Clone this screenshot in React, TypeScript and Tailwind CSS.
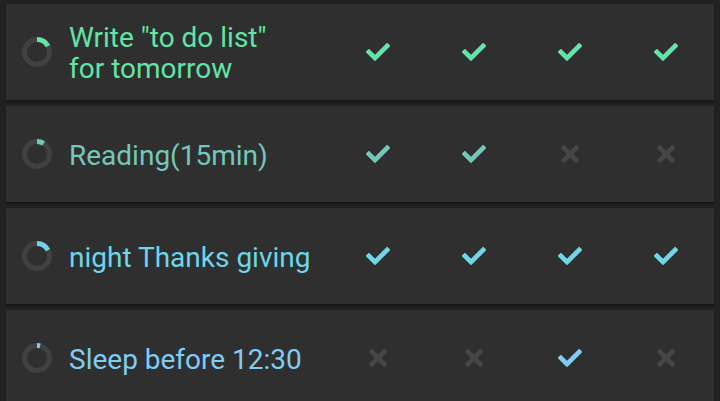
import React from "react";
import { FaCheck, FaTimes } from "react-icons/fa";

type Row = { text: string[]; color: string; pct: number; marks: boolean[] };

const rows: Row[] = [
  { text: ['Write "to do list"', "for tomorrow"], color: "#5fe6a6", pct: 0.17, marks: [true, true, true, true] },
  { text: ["Reading(15min)"], color: "#72c8bb", pct: 0.09, marks: [true, true, false, false] },
  { text: ["night Thanks giving"], color: "#6dd6e8", pct: 0.17, marks: [true, true, true, true] },
  { text: ["Sleep before 12:30"], color: "#7ecdf4", pct: 0.04, marks: [false, false, true, false] },
];

function Ring({ color, pct }: { color: string; pct: number }) {
  const r = 12.5;
  const c = 2 * Math.PI * r;
  return (
    <svg width="30" height="30" viewBox="0 0 30 30" className="shrink-0">
      <circle cx="15" cy="15" r={r} fill="none" stroke="#414141" strokeWidth="5" />
      <circle
        cx="15"
        cy="15"
        r={r}
        fill="none"
        stroke={color}
        strokeWidth="5"
        strokeDasharray={`${c * pct} ${c}`}
        transform="rotate(-90 15 15)"
      />
    </svg>
  );
}

export default function App() {
  return (
    <div
      className="w-[720px] h-[401px] overflow-hidden bg-[#212121] flex flex-col gap-[6px] pt-[4px] px-[6px]"
      style={{ fontFamily: "Roboto, 'Liberation Sans', sans-serif" }}
    >
      {rows.map((row, i) => (
        <div
          key={i}
          className="h-[96px] shrink-0 bg-[#2f2f2f] flex items-center pl-4 shadow-[0_2px_2px_rgba(0,0,0,0.35)]"
        >
          <Ring color={row.color} pct={row.pct} />
          <div
            className="ml-[17px] flex-1 text-[28px] leading-[31px] pt-[2px]"
            style={{ color: row.color }}
          >
            {row.text.map((t, j) => (
              <div key={j}>{t}</div>
            ))}
          </div>
          {row.marks.map((m, k) => (
            <div key={k} className="w-24 flex items-center justify-center">
              {m ? (
                <FaCheck size={24} color={row.color} />
              ) : (
                <FaTimes size={26} color="#464646" />
              )}
            </div>
          ))}
        </div>
      ))}
    </div>
  );
}
